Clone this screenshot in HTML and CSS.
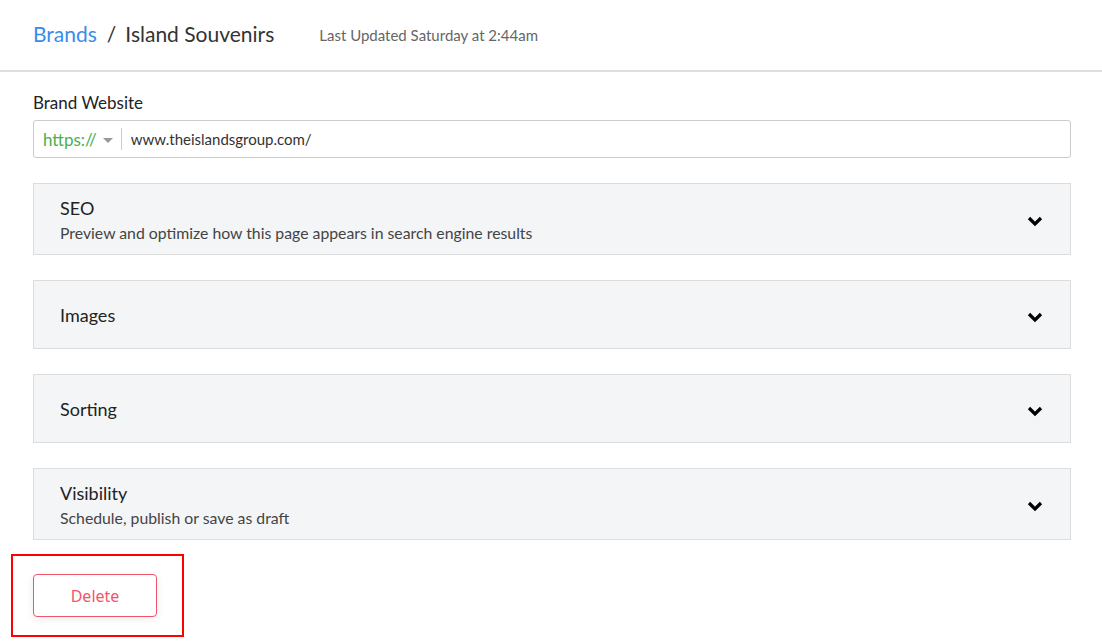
FILE: index.html
```html
<!DOCTYPE html>
<html lang="en">
<head>
    <meta charset="UTF-8">
    <meta name="viewport" content="width=device-width, initial-scale=1.0">
    <title>Island Souvenirs</title>
    <link rel="stylesheet" href="styles.css">
</head>
<body>
    <header class="page-header">
        <div class="crumbs">
            <a href="#" class="crumb-link">Brands</a>
            <span class="crumb-sep">/</span>
            <span class="crumb-current">Island Souvenirs</span>
        </div>
        <span class="updated">Last Updated Saturday at 2:44am</span>
    </header>

    <main class="content">
        <label class="field-label">Brand Website</label>
        <div class="url-input">
            <span class="protocol">https://</span>
            <span class="caret"></span>
            <span class="url-divider"></span>
            <span class="url-text">www.theislandsgroup.com/</span>
        </div>

        <!-- collapsible sections -->
        <div class="panel tall">
            <div class="panel-text">
                <div class="panel-title">SEO</div>
                <div class="panel-sub">Preview and optimize how this page appears in search engine results</div>
            </div>
            <svg class="chevron" width="16" height="11" viewBox="0 0 16 11"><path d="M2 2l6 6 6-6" fill="none" stroke="#000" stroke-width="3.2"/></svg>
        </div>

        <div class="panel">
            <div class="panel-text">
                <div class="panel-title">Images</div>
            </div>
            <svg class="chevron" width="16" height="11" viewBox="0 0 16 11"><path d="M2 2l6 6 6-6" fill="none" stroke="#000" stroke-width="3.2"/></svg>
        </div>

        <div class="panel">
            <div class="panel-text">
                <div class="panel-title">Sorting</div>
            </div>
            <svg class="chevron" width="16" height="11" viewBox="0 0 16 11"><path d="M2 2l6 6 6-6" fill="none" stroke="#000" stroke-width="3.2"/></svg>
        </div>

        <div class="panel tall">
            <div class="panel-text">
                <div class="panel-title">Visibility</div>
                <div class="panel-sub">Schedule, publish or save as draft</div>
            </div>
            <svg class="chevron" width="16" height="11" viewBox="0 0 16 11"><path d="M2 2l6 6 6-6" fill="none" stroke="#000" stroke-width="3.2"/></svg>
        </div>

        <div class="delete-wrap">
            <button class="btn-delete">Delete</button>
        </div>
    </main>
</body>
</html>
```

FILE: styles.css
```css
* {
    box-sizing: border-box;
}

body {
    margin: 0;
    font-family: Lato, "Open Sans", sans-serif;
    color: #333;
    background: #fff;
}

.page-header {
    height: 72px;
    display: flex;
    align-items: center;
    padding: 0 33px 4px;
    border-bottom: 2px solid #dedede;
}

.crumbs {
    font-size: 21px;
    display: flex;
    align-items: baseline;
}

.crumb-link {
    color: #3b8beb;
    text-decoration: none;
}

.crumb-sep {
    margin: 0 9px 0 10px;
    color: #333;
}

.crumb-current {
    color: #333;
}

.updated {
    margin-left: 45px;
    margin-top: 4px;
    font-size: 15px;
    color: #666;
}

.content {
    padding: 20px 31px 0 33px;
}

.field-label {
    display: block;
    font-size: 17px;
    color: #222;
    margin-bottom: 7px;
}

.url-input {
    height: 38px;
    border: 1px solid #ccc;
    border-radius: 3px;
    display: flex;
    align-items: center;
    padding-left: 9px;
}

.protocol {
    color: #4caf50;
    font-size: 17px;
}

.caret {
    width: 0;
    height: 0;
    border-left: 5px solid transparent;
    border-right: 5px solid transparent;
    border-top: 5px solid #999;
    margin: 2px 0 0 6px;
}

.url-divider {
    width: 1px;
    height: 22px;
    background: #ccc;
    margin: 0 9px 0 8px;
}

.url-text {
    font-size: 15px;
    color: #333;
}

.panel {
    margin-top: 25px;
    height: 69px;
    background: #f4f5f7;
    border: 1px solid #dcdcdc;
    display: flex;
    align-items: center;
    padding: 0 27px 0 26px;
}

.panel.tall {
    height: 72px;
}

.panel-text {
    flex: 1;
}

.panel-title {
    font-size: 18px;
    color: #222;
}

.panel-sub {
    font-size: 15.8px;
    color: #444;
    margin-top: 4px;
}

.chevron {
    display: block;
    margin-top: 5px;
}

.delete-wrap {
    margin: 14px 0 0 -22px;
    width: 173px;
    height: 83px;
    border: 2px solid #f00;
    display: flex;
    align-items: center;
    padding-left: 20px;
}

.btn-delete {
    width: 124px;
    height: 43px;
    background: #fff;
    border: 1px solid #f0566b;
    border-radius: 4px;
    color: #f0566b;
    font-family: "Noto Sans", sans-serif;
    font-size: 16px;
    box-shadow: 0 2px 8px rgba(0, 0, 0, 0.08);
    cursor: pointer;
}
```
